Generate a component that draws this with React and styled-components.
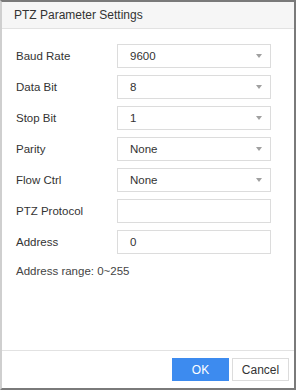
import React from "react";
import styled, { createGlobalStyle } from "styled-components";

const GlobalStyle = createGlobalStyle`
  html, body {
    margin: 0;
    padding: 0;
    background: #ffffff;
    font-family: "Liberation Sans", Arial, sans-serif;
  }
`;

const fields = [
  { label: "Baud Rate", value: "9600", select: true },
  { label: "Data Bit", value: "8", select: true },
  { label: "Stop Bit", value: "1", select: true },
  { label: "Parity", value: "None", select: true },
  { label: "Flow Ctrl", value: "None", select: true },
  { label: "PTZ Protocol", value: "", select: false },
  { label: "Address", value: "0", select: false },
];

export default function App() {
  return (
    <>
      <GlobalStyle />
      <Dialog>
        <Header>PTZ Parameter Settings</Header>
        <Body>
          {fields.map((f) => (
            <Row key={f.label}>
              <Label>{f.label}</Label>
              <Field>
                <Value>{f.value}</Value>
                {f.select && <Arrow />}
              </Field>
            </Row>
          ))}
          <Hint>Address range: 0~255</Hint>
        </Body>
        <Footer>
          <Button $primary>OK</Button>
          <Button>Cancel</Button>
        </Footer>
      </Dialog>
    </>
  );
}

const Dialog = styled.div`
  box-sizing: border-box;
  width: 296px;
  height: 390px;
  display: flex;
  flex-direction: column;
  border: 2px solid #7a7a7a;
  border-left: 2px solid #cfcfcf;
  background: #fff;
`;

const Header = styled.div`
  height: 26px;
  display: flex;
  align-items: center;
  padding-left: 12px;
  background: #f6f6f6;
  border-bottom: 1px solid #e2e2e2;
  font-size: 12px;
  color: #333;
`;

const Body = styled.div`
  flex: 1;
  display: flex;
  flex-direction: column;
  gap: 7px;
  padding: 15px 23px 0 14px;
`;

const Row = styled.div`
  display: flex;
  align-items: center;
  height: 24px;
`;

const Label = styled.div`
  width: 101px;
  font-size: 11.5px;
  color: #333;
`;

const Field = styled.div`
  box-sizing: border-box;
  width: 154px;
  height: 24px;
  display: flex;
  align-items: center;
  justify-content: space-between;
  padding: 0 8px 0 12px;
  border: 1px solid #dcdcdc;
  background: #fff;
`;

const Value = styled.span`
  font-size: 11.5px;
  color: #333;
`;

const Arrow = styled.span`
  width: 0;
  height: 0;
  border-left: 3px solid transparent;
  border-right: 3px solid transparent;
  border-top: 4px solid #a0a0a0;
`;

const Hint = styled.div`
  margin-top: 4px;
  font-size: 11.5px;
  color: #444;
`;

const Footer = styled.div`
  display: flex;
  justify-content: flex-end;
  gap: 3px;
  padding: 7px 5px;
  border-top: 1px solid #e2e2e2;
`;

const Button = styled.button`
  box-sizing: border-box;
  width: 57px;
  height: 23px;
  padding: 0;
  font-family: "Liberation Sans", Arial, sans-serif;
  font-size: 12px;
  color: ${(p) => (p.$primary ? "#fff" : "#333")};
  background: ${(p) => (p.$primary ? "#3d8bef" : "#fff")};
  border: 1px solid ${(p) => (p.$primary ? "#3d8bef" : "#dcdcdc")};
`;
